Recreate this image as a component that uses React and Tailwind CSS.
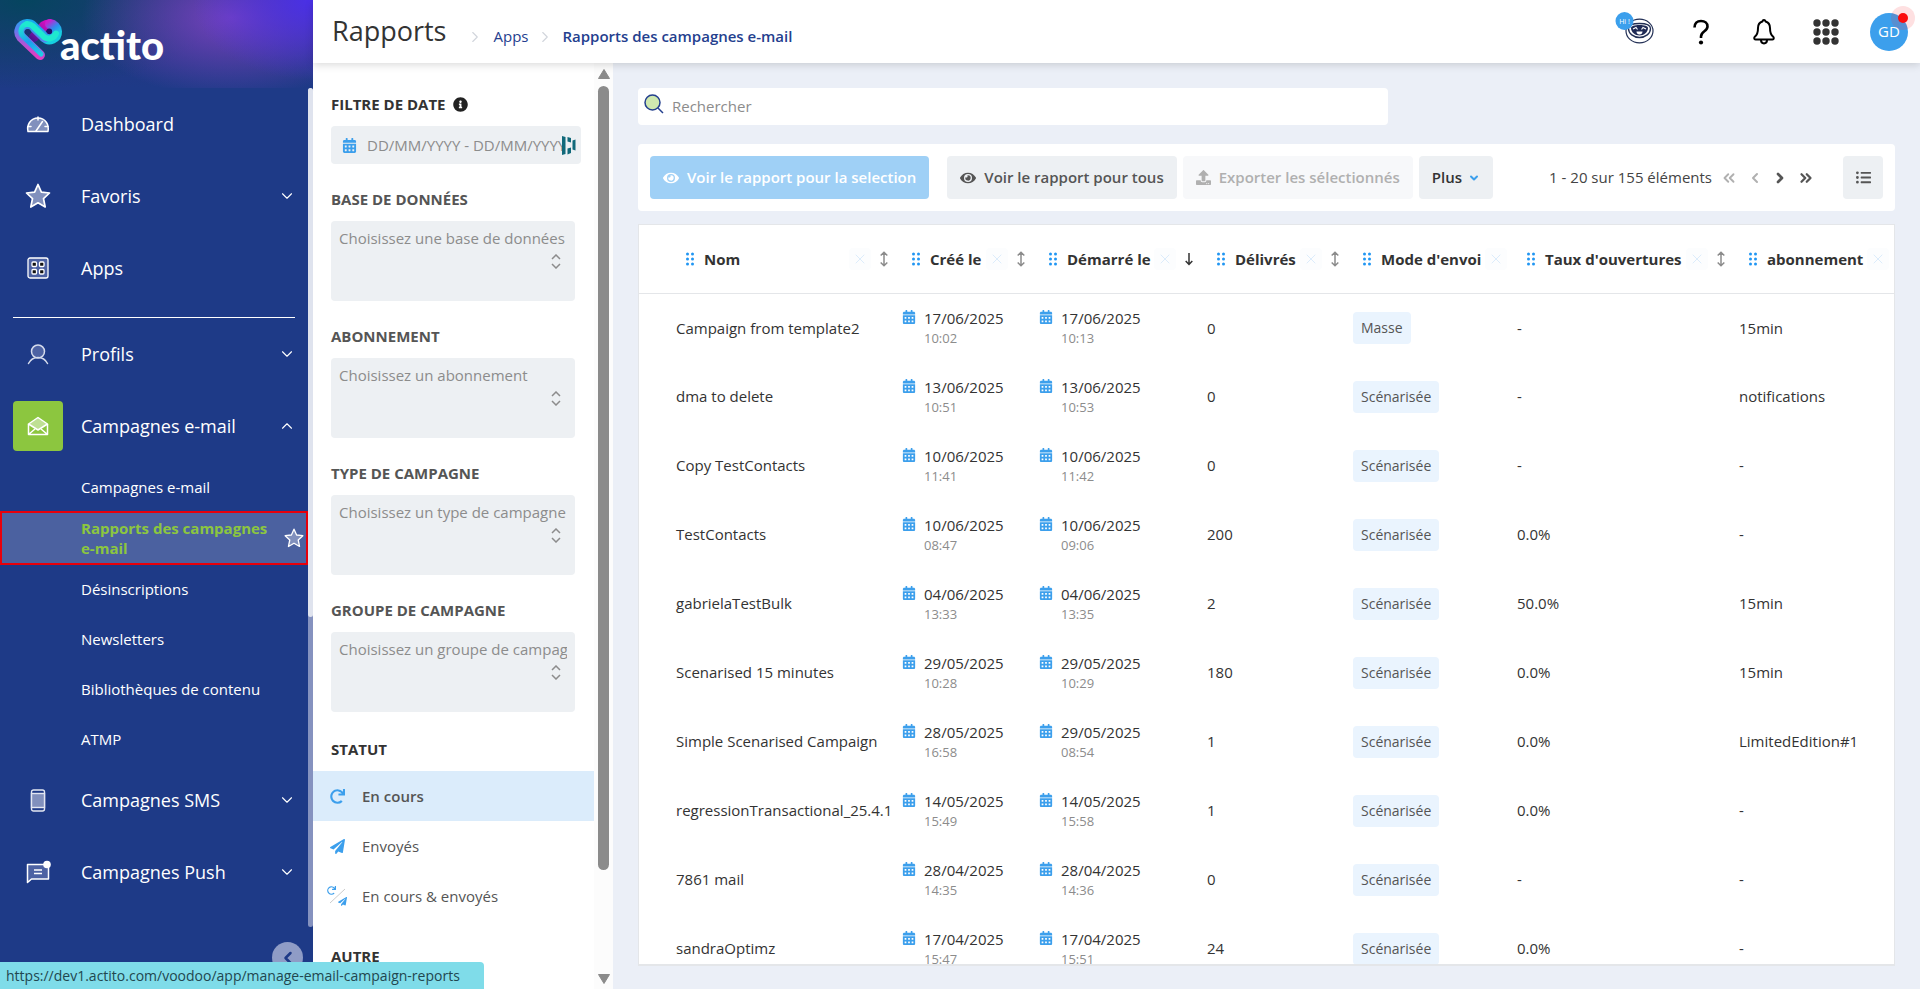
import { ChevronDown, ChevronLeft, ChevronRight, ChevronUp, ChevronsLeft, ChevronsRight, X } from 'lucide-react';
import { FaCalendarAlt, FaEye, FaInfoCircle, FaListUl, FaPaperPlane, FaRedo, FaUpload } from 'react-icons/fa';

const CAMPAIGNS = [
    { name: 'Campaign from template2', created: ['17/06/2025', '10:02'], started: ['17/06/2025', '10:13'], delivered: '0', mode: 'Masse', rate: '-', sub: '15min' },
    { name: 'dma to delete', created: ['13/06/2025', '10:51'], started: ['13/06/2025', '10:53'], delivered: '0', mode: 'Scénarisée', rate: '-', sub: 'notifications' },
    { name: 'Copy TestContacts', created: ['10/06/2025', '11:41'], started: ['10/06/2025', '11:42'], delivered: '0', mode: 'Scénarisée', rate: '-', sub: '-' },
    { name: 'TestContacts', created: ['10/06/2025', '08:47'], started: ['10/06/2025', '09:06'], delivered: '200', mode: 'Scénarisée', rate: '0.0%', sub: '-' },
    { name: 'gabrielaTestBulk', created: ['04/06/2025', '13:33'], started: ['04/06/2025', '13:35'], delivered: '2', mode: 'Scénarisée', rate: '50.0%', sub: '15min' },
    { name: 'Scenarised 15 minutes', created: ['29/05/2025', '10:28'], started: ['29/05/2025', '10:29'], delivered: '180', mode: 'Scénarisée', rate: '0.0%', sub: '15min' },
    { name: 'Simple Scenarised Campaign', created: ['28/05/2025', '16:58'], started: ['29/05/2025', '08:54'], delivered: '1', mode: 'Scénarisée', rate: '0.0%', sub: 'LimitedEdition#1' },
    { name: 'regressionTransactional_25.4.1', created: ['14/05/2025', '15:49'], started: ['14/05/2025', '15:58'], delivered: '1', mode: 'Scénarisée', rate: '0.0%', sub: '-' },
    { name: '7861 mail', created: ['28/04/2025', '14:35'], started: ['28/04/2025', '14:36'], delivered: '0', mode: 'Scénarisée', rate: '-', sub: '-' },
    { name: 'sandraOptimz', created: ['17/04/2025', '15:47'], started: ['17/04/2025', '15:51'], delivered: '24', mode: 'Scénarisée', rate: '0.0%', sub: '-' },
];

const COLUMNS = [
    { label: 'Nom', sort: 'both' },
    { label: 'Créé le', sort: 'both' },
    { label: 'Démarré le', sort: 'desc' },
    { label: 'Délivrés', sort: 'both' },
    { label: "Mode d'envoi" },
    { label: "Taux d'ouvertures", sort: 'both' },
    { label: 'abonnement' },
];

const FILTERS = [
    { id: 'database', label: 'Base de données', placeholder: 'Choisissez une base de données' },
    { id: 'subscription', label: 'Abonnement', placeholder: 'Choisissez un abonnement' },
    { id: 'type', label: 'Type de campagne', placeholder: 'Choisissez un type de campagne' },
    { id: 'group', label: 'Groupe de campagne', placeholder: 'Choisissez un groupe de campagne' },
];

function Logo() {
    return (
        <svg className="shrink-0" width="50" height="44" viewBox="0 0 50 44" fill="none" strokeLinecap="round" strokeLinejoin="round" aria-hidden="true">
            <defs>
                <linearGradient id="outer" gradientUnits="userSpaceOnUse" x1="24" y1="8" x2="12" y2="34">
                    <stop offset="0" stopColor="#18a9ee" />
                    <stop offset="0.5" stopColor="#5f7df0" />
                    <stop offset="1" stopColor="#e03cc4" />
                </linearGradient>
                <linearGradient id="inner" gradientUnits="userSpaceOnUse" x1="12" y1="6" x2="26" y2="40">
                    <stop offset="0" stopColor="#1fe9d0" />
                    <stop offset="0.5" stopColor="#1b9df0" />
                    <stop offset="1" stopColor="#22d0e4" />
                </linearGradient>
                <linearGradient id="fold" gradientUnits="userSpaceOnUse" x1="37" y1="4" x2="19" y2="24">
                    <stop offset="0" stopColor="#e80fc4" />
                    <stop offset="0.5" stopColor="#a30fb4" />
                    <stop offset="1" stopColor="#46158c" />
                </linearGradient>
                <linearGradient id="loop" gradientUnits="userSpaceOnUse" x1="34" y1="5" x2="44" y2="18">
                    <stop offset="0" stopColor="#c91fd0" />
                    <stop offset="0.5" stopColor="#2f8cf0" />
                    <stop offset="1" stopColor="#16cfe0" />
                </linearGradient>
            </defs>
            <path d="M36 7.500A8 8 0 0 0 30 9L20 20" stroke="url(#fold)" strokeWidth="10" />
            <path d="M36 7A8 8 0 0 1 43 14.500A7.500 7.500 0 0 1 30.300 20.200" stroke="url(#loop)" strokeWidth="10" />
            <path d="M26 38L7.300 20.200A8 8 0 0 1 13 7A8 8 0 0 1 18.700 9L30.300 20.200" stroke="url(#outer)" strokeWidth="10" />
            <path d="M27 37L9 19.500A7.500 7.500 0 0 1 13 7" stroke="url(#inner)" strokeWidth="5" />
            <path d="M13 7A8 8 0 0 1 18.700 9L30.300 20.200A8 8 0 0 0 42 16.500" stroke="#1fe9cf" strokeWidth="6" />
            <circle cx="14" cy="14.700" r="2.600" fill="#1b3173" />
            <circle cx="35.300" cy="14.200" r="2.800" fill="#23106a" />
        </svg>
    );
}

function DashboardIcon() {
    return (
        <svg width="24" height="18" viewBox="0 0 24 18" fill="none" stroke="#fff" strokeWidth="1.5" strokeLinecap="round" strokeLinejoin="round">
            <path d="M2 16.5h20c.5-3 .5-6-1.500-9A10.300 10.300 0 0 0 3.500 7.500C1.500 10.500 1.300 13.500 2 16.500z" fill="#8190bd" />
            <path d="M12 2v3M2 11.500h3M19 11.500h3M10 16l6.500-9.500" />
        </svg>
    );
}

function StarIcon({ size = 26 }) {
    return (
        <svg width={size} height={size} viewBox="0 0 26 26" fill="#8190bd" stroke="#fff" strokeWidth="1.700" strokeLinejoin="round">
            <path d="M13 1.500l3.400 7.600 8.100.9-6 5.600 1.700 8.400-7.200-4.200L5.800 24l1.700-8.400-6-5.600 8.100-.9z" />
        </svg>
    );
}

function AppsIcon() {
    return (
        <svg width="22" height="22" viewBox="0 0 22 22" stroke="#fff" fill="none">
            <rect x="1" y="1" width="20" height="20" rx="2" fill="#4d62a3" strokeWidth="1.300" />
            {[5, 12.5].map((x) =>
                [5, 12.5].map((y) => <rect key={`${x}-${y}`} x={x} y={y} width="4.500" height="4.500" rx="1" fill="#111" strokeWidth="1.300" />)
            )}
        </svg>
    );
}

function ProfileIcon() {
    return (
        <svg width="22" height="21" viewBox="0 0 22 21" fill="none" stroke="#d5dbec" strokeWidth="1.500" strokeLinecap="round">
            <circle cx="11" cy="7.500" r="6.500" fill="#4d62a3" />
            <path d="M1.500 19.500c2-4 5.500-6 9.500-6s7.500 2 9.500 6" />
        </svg>
    );
}

function MailIcon() {
    return (
        <svg width="22" height="20" viewBox="0 0 22 20" fill="none" stroke="#fff" strokeWidth="1.500" strokeLinejoin="round">
            <path d="M1.500 8L11 1.500 20.500 8 11 14z" fill="#bfe094" />
            <path d="M1.500 8v10.500h19V8M1.500 18.500l6.500-5.500M20.500 18.500L14 13" />
        </svg>
    );
}

function PhoneIcon() {
    return (
        <svg width="16" height="23" viewBox="0 0 16 23" fill="none" stroke="#e3e7f2" strokeWidth="1.400">
            <rect x="1.500" y="1" width="13" height="21" rx="2" />
            <rect x="1.500" y="4.500" width="13" height="14" fill="#8190bd" />
        </svg>
    );
}

function PushIcon() {
    return (
        <svg width="25" height="24" viewBox="0 0 25 24" fill="none" stroke="#fff" strokeWidth="1.500" strokeLinejoin="round">
            <path d="M1.500 4.500h21v14.500H5.500l-4 3.500z" fill="#4d62a3" />
            <path d="M8 10h8M8 13.500h8" />
            <circle cx="21" cy="4.500" r="3.800" fill="#fff" stroke="none" />
        </svg>
    );
}

function RobotIcon() {
    return (
        <svg width="40" height="34" viewBox="0 0 40 34" fill="none" aria-hidden="true">
            <ellipse cx="24.500" cy="20" rx="13.500" ry="11.800" stroke="#233056" strokeWidth="1.200" />
            <path d="M13.500 17.500c0-3 4-5 11-5s11 2 11 5c0 5-5 9-11 9s-11-4-11-9z" stroke="#233056" strokeWidth="1.300" />
            <path d="M16 17c0-2 3.500-3 8.500-3s8.500 1 8.500 3c0 4-4 7.500-8.500 7.500S16 21 16 17z" fill="#1f2a55" />
            <path d="M18 18l3-1.500 1.500 2M31 18l-3-1.500-1.500 2" stroke="#fff" strokeWidth="1.200" />
            <path d="M21.500 20.500h6c0 2-1.300 3-3 3s-3-1-3-3z" fill="#fff" />
            <circle cx="9.500" cy="10" r="9" fill="#3c9fec" />
            <text x="9.500" y="12.500" textAnchor="middle" fontSize="7" fill="#fff" fontFamily="Open Sans, sans-serif">Hi !</text>
        </svg>
    );
}

function BellIcon() {
    return (
        <svg width="22" height="26" viewBox="0 0 22 26" fill="none" stroke="#000" strokeWidth="2" strokeLinejoin="round">
            <path d="M9.500 2.500a1.500 1.500 0 0 1 3 0c3 .8 4.500 3.500 4.500 6.500 0 5 1 7 3 8.500 1.200 1 1 3-.5 3h-17c-1.500 0-1.700-2-.5-3C4 16 5 14 5 9c0-3 1.500-5.700 4.500-6.500z" />
            <path d="M8 21c0 4.500 6 4.500 6 0" />
        </svg>
    );
}

function HelpIcon() {
    return (
        <svg width="16" height="26" viewBox="0 0 16 26" fill="none" stroke="#000" strokeWidth="2.600">
            <path d="M1.500 8.500C1.500 4.500 4 2 8 2s6.500 2.300 6.500 5.500c0 5-6.500 4.500-6.500 10V19" />
            <circle cx="8" cy="23.500" r="2.100" fill="#000" stroke="none" />
        </svg>
    );
}

function DotsIcon() {
    return (
        <svg width="26" height="26" viewBox="0 0 26 26" fill="#333">
            {[4, 13, 22].map((x) => [4, 13, 22].map((y) => <circle key={`${x}-${y}`} cx={x} cy={y} r="3.700" />))}
        </svg>
    );
}

function DragIcon() {
    return (
        <svg className="shrink-0" width="8" height="14" viewBox="0 0 8 14" fill="#2196f3">
            {[1.5, 6.5].map((x) => [2, 7, 12].map((y) => <circle key={`${x}-${y}`} cx={x} cy={y} r="1.500" />))}
        </svg>
    );
}

function SortIcon({ sort }) {
    if (sort === 'desc') {
        return (
            <svg width="8" height="16" viewBox="0 0 8 16" fill="none" stroke="#333" strokeWidth="1.500">
                <path d="M4 2v11.500M.7 10L4 13.500 7.300 10" />
            </svg>
        );
    }
    return (
        <svg width="8" height="16" viewBox="0 0 8 16" fill="none" stroke="#8c8c8c" strokeWidth="1.500">
            <path d="M4 1.500v13M.7 4.500L4 1.200l3.300 3.300M.7 11.500L4 14.800l3.300-3.300" />
        </svg>
    );
}

function NavItem({ icon, label, chevron, active }) {
    const Chevron = chevron === 'up' ? ChevronUp : ChevronDown;
    return (
        <button className="flex h-18 w-full items-center pl-[13px] pr-3 text-left text-lg text-white">
            <span className={`flex size-[50px] items-center justify-center rounded ${active ? 'bg-[#8cc63f]' : ''}`}>{icon}</span>
            <span className="ml-[18px] flex-1">{label}</span>
            {chevron && <Chevron size={18} strokeWidth={1.5} />}
        </button>
    );
}

function SubItem({ label }) {
    return (
        <a href="#" className="flex h-[50px] items-center pl-[81px] pr-10 text-[15px] text-white">
            {label}
        </a>
    );
}

function Sidebar() {
    return (
        <aside className="relative flex w-[313px] shrink-0 flex-col bg-[#1e3a87] text-white">
            <div className="h-[88px] shrink-0 bg-[radial-gradient(ellipse_120px_80px_at_100%_0%,#4a30e8,transparent),radial-gradient(ellipse_150px_80px_at_74%_20%,#7442bd,transparent),radial-gradient(ellipse_200px_90px_at_8%_0%,#05455f,transparent),linear-gradient(#28337f,#1e3a87)] pl-[14px] pt-[17px]">
                <a href="#" className="flex items-start">
                    <Logo />
                    <span className="-ml-1 pt-[10px] font-['Lato',sans-serif] text-[40px] leading-9 font-black">actito</span>
                </a>
            </div>
            <div className="flex min-h-0 flex-1">
                <nav className="min-w-0 flex-1">
                    <NavItem icon={<DashboardIcon />} label="Dashboard" />
                    <NavItem icon={<StarIcon />} label="Favoris" chevron="down" />
                    <NavItem icon={<AppsIcon />} label="Apps" />
                    <hr className="mx-[13px] mt-[13px] border-white" />
                    <NavItem icon={<ProfileIcon />} label="Profils" chevron="down" />
                    <NavItem icon={<MailIcon />} label="Campagnes e-mail" chevron="up" active />
                    <SubItem label="Campagnes e-mail" />
                    <a href="#" className="-my-px flex h-[54px] items-center justify-between border-2 border-red-600 bg-[#4b61a0] pr-0.5 pl-[79px] text-[15px] leading-5 font-bold text-[#8cc63f]">
                        <span className="w-48">Rapports des campagnes e-mail</span>
                        <StarIcon size={20} />
                    </a>
                    <SubItem label="Désinscriptions" />
                    <SubItem label="Newsletters" />
                    <SubItem label="Bibliothèques de contenu" />
                    <SubItem label="ATMP" />
                    <NavItem icon={<PhoneIcon />} label="Campagnes SMS" chevron="down" />
                    <NavItem icon={<PushIcon />} label="Campagnes Push" chevron="down" />
                </nav>
                <div className="mb-[62px] w-[5px] rounded bg-[#8592bf]">
                    <div className="h-[63%] rounded bg-[#dfe3ee]" />
                </div>
            </div>
            <button aria-label="Réduire le menu" className="absolute right-[10px] bottom-4 flex size-[31px] items-center justify-center rounded-full bg-[#8f9cc6] text-[#1e3a87]">
                <ChevronLeft size={20} strokeWidth={3} />
            </button>
        </aside>
    );
}

function Header() {
    return (
        <header className="z-10 flex h-[63px] shrink-0 items-center bg-white pr-3 pl-[19px] shadow-[0_2px_8px_rgba(0,0,0,0.15)]">
            <h1 className="text-[27px] font-medium text-[#333]">Rapports</h1>
            <nav className="flex items-center pt-2.5 pl-5 text-[15px] text-[#24408e]">
                <ChevronRight size={18} strokeWidth={1.5} className="text-gray-300" />
                <a href="#" className="ml-[9px]">Apps</a>
                <ChevronRight size={18} strokeWidth={1.5} className="mx-2 text-gray-300" />
                <a href="#" className="font-semibold">Rapports des campagnes e-mail</a>
            </nav>
            <div className="ml-auto flex items-center">
                <button aria-label="Assistant" className="mr-[38px] mb-2"><RobotIcon /></button>
                <button aria-label="Aide" className="mr-11"><HelpIcon /></button>
                <button aria-label="Notifications" className="mr-[38px]"><BellIcon /></button>
                <button aria-label="Applications" className="mr-[31px]"><DotsIcon /></button>
                <button className="relative size-[38px] rounded-full bg-[#3c9fec] text-[15px] text-white">
                    GD
                    <span className="absolute -top-[7px] -right-[7px] flex size-6 items-center justify-center rounded-full bg-red-500/15">
                        <span className="size-[10px] rounded-full bg-[#fb0d0d]" />
                    </span>
                </button>
            </div>
        </header>
    );
}

function StatusItem({ icon, label, active }) {
    return (
        <button className={`flex h-[50px] w-full items-center pl-[14px] text-left text-[#555] ${active ? 'bg-[#dbecfb] font-semibold' : ''}`}>
            <span className="flex w-5 justify-center text-[#3c9fec]">{icon}</span>
            <span className="ml-[15px]">{label}</span>
        </button>
    );
}

function Filters() {
    return (
        <div className="flex w-[300px] shrink-0 overflow-hidden bg-white">
            <div className="min-w-0 flex-1 pt-[31px]">
                <div className="pr-8 pl-[18px]">
                    <label htmlFor="dates" className="flex h-5 items-center gap-[7px] font-bold text-[#333] uppercase">
                        Filtre de date <FaInfoCircle className="text-[#222]" />
                    </label>
                    <div className="relative mt-3">
                        <FaCalendarAlt className="absolute top-3 left-[11px] text-[#3c9fec]" />
                        <input id="dates" placeholder="DD/MM/YYYY - DD/MM/YYYY" className="h-[38px] w-[250px] rounded bg-[#edf0f3] pr-4 pl-9 placeholder:text-[#8c8c8c]" />
                        <svg className="absolute top-[10px] left-[231px]" width="14" height="19" viewBox="0 0 14 19" fill="#11697a">
                            <path d="M0 0l3.500 1v17L0 19zM5.500 1L9 2v4.500l-3.500-1zM5.500 12.500L9 11.500V17l-3.500 1.500zM10.500 4.500L13.500 3.500v11l-3-1z" />
                        </svg>
                    </div>
                    {FILTERS.map((filter) => (
                        <div key={filter.id} className="mt-[25px]">
                            <label htmlFor={filter.id} className="block h-5 leading-5 font-bold text-[#555] uppercase">{filter.label}</label>
                            <div className="relative mt-3">
                                <select id={filter.id} className="h-20 w-[244px] appearance-none rounded bg-[#edf0f3] px-2 pb-[46px] text-[#8c8c8c]">
                                    <option>{filter.placeholder}</option>
                                </select>
                                <svg className="pointer-events-none absolute top-[33px] left-[220px]" width="10" height="15" viewBox="0 0 10 15" fill="none" stroke="#8c8c8c" strokeWidth="1.500">
                                    <path d="M1 5l4-4 4 4M1 10l4 4 4-4" />
                                </svg>
                            </div>
                        </div>
                    ))}
                    <h2 className="mt-[27px] h-5 leading-5 font-bold text-[#333] uppercase">Statut</h2>
                </div>
                <div className="mt-3">
                    <StatusItem active icon={<FaRedo />} label="En cours" />
                    <StatusItem icon={<FaPaperPlane />} label="Envoyés" />
                    <StatusItem
                        icon={
                            <span className="relative size-5">
                                <FaRedo className="absolute top-0 left-0 size-[9px]" />
                                <svg className="absolute inset-0" width="20" height="20" viewBox="0 0 20 20" stroke="#ccc"><path d="M3 17L18 3" /></svg>
                                <FaPaperPlane className="absolute right-0 bottom-0 size-[9px]" />
                            </span>
                        }
                        label="En cours & envoyés"
                    />
                </div>
                <h2 className="mt-6 pl-[18px] font-bold text-[#333] uppercase">Autre</h2>
            </div>
            <div className="flex w-[19px] flex-col items-center bg-[#fcfcfc] pt-[5px] pb-1">
                <svg width="14" height="12" viewBox="0 0 14 12" fill="#8b8b8b"><path d="M7 1.500L12.500 10.500h-11z" stroke="#8b8b8b" strokeLinejoin="round" /></svg>
                <div className="mt-1.5 w-[11px] rounded-full bg-[#8b8b8b] basis-[784px]" />
                <svg className="mt-auto" width="14" height="12" viewBox="0 0 14 12" fill="#8b8b8b"><path d="M7 10.500L1.500 1.500h11z" stroke="#8b8b8b" strokeLinejoin="round" /></svg>
            </div>
        </div>
    );
}

function Toolbar() {
    return (
        <div className="mt-[19px] flex h-[67px] shrink-0 items-center rounded-sm bg-white px-3">
            <button className="flex h-[43px] items-center gap-2 rounded bg-[#9fd0f6] px-[13px] font-semibold text-white">
                <FaEye size={16} /> Voir le rapport pour la selection
            </button>
            <button className="ml-[18px] flex h-[43px] items-center gap-2 rounded bg-[#edf0f3] px-[13px] font-semibold text-[#555]">
                <FaEye size={16} /> Voir le rapport pour tous
            </button>
            <button disabled className="ml-1.5 flex h-[43px] items-center gap-2 rounded bg-[#f7f8fa] px-[13px] font-semibold text-[#b0b0b0]">
                <FaUpload /> Exporter les sélectionnés
            </button>
            <button className="ml-1.5 flex h-[43px] items-center gap-1.5 rounded bg-[#edf0f3] px-[13px] font-semibold text-[#333]">
                Plus <ChevronDown size={12} strokeWidth={4} className="text-[#3c9fec]" />
            </button>
            <span className="ml-auto text-[#444]">1 - 20 sur 155 éléments</span>
            <div className="ml-2 flex items-center gap-[9px] text-[#555]">
                <button disabled aria-label="Première page" className="text-[#b0b0b0]"><ChevronsLeft size={18} strokeWidth={2.5} /></button>
                <button disabled aria-label="Page précédente" className="text-[#b0b0b0]"><ChevronLeft size={16} strokeWidth={3} /></button>
                <button aria-label="Page suivante"><ChevronRight size={16} strokeWidth={4} /></button>
                <button aria-label="Dernière page"><ChevronsRight size={18} strokeWidth={3} /></button>
            </div>
            <button aria-label="Colonnes" className="ml-7 flex h-[43px] w-10 items-center justify-center rounded bg-[#edf0f3] text-[#555]">
                <FaListUl />
            </button>
        </div>
    );
}

function DateCell({ value }) {
    return (
        <div className="flex gap-2">
            <FaCalendarAlt className="mt-[2px] size-[14px] shrink-0 text-[#3c9fec]" />
            <div className="leading-5">
                {value[0]}
                <div className="text-[13px] text-[#8c8c8c]">{value[1]}</div>
            </div>
        </div>
    );
}

function ReportsTable() {
    return (
        <div className="mt-[13px] mb-[23px] min-h-0 flex-1 overflow-hidden border border-b-2 border-[#e4e6e9] bg-white">
            <table className="w-full table-fixed text-left text-[#333]">
                <colgroup>
                    <col className="w-[37px]" />
                    <col className="w-[226px]" />
                    <col className="w-[137px]" />
                    <col className="w-[168px]" />
                    <col className="w-[146px]" />
                    <col className="w-[164px]" />
                    <col className="w-[222px]" />
                    <col />
                </colgroup>
                <thead>
                    <tr className="h-[68px] border-b border-[#e4e6e9]">
                        <th />
                        {COLUMNS.map(({ label, sort }) => (
                            <th key={label} className="p-0 font-bold whitespace-nowrap">
                                <div className="flex items-center pl-2.5">
                                    <DragIcon />
                                    <span className="ml-2.5">{label}</span>
                                    <button aria-label="Retirer" className={`${sort ? 'ml-auto' : 'ml-1'} flex size-[22px] shrink-0 items-center justify-center rounded bg-[#fcfdfe] text-[#dcecfb]`}>
                                        <X size={16} strokeWidth={1.5} />
                                    </button>
                                    {sort && <button aria-label="Trier" className="mr-[14px] ml-[9px]"><SortIcon sort={sort} /></button>}
                                </div>
                            </th>
                        ))}
                    </tr>
                </thead>
                <tbody>
                    {CAMPAIGNS.map((row) => (
                        <tr key={row.name} className="h-[69px]">
                            <td />
                            <td className="p-0 whitespace-nowrap">{row.name}</td>
                            <td className="p-0"><DateCell value={row.created} /></td>
                            <td className="p-0"><DateCell value={row.started} /></td>
                            <td className="p-0">{row.delivered}</td>
                            <td className="p-0">
                                <span className="inline-flex h-8 items-center rounded bg-[#eaf4fe] px-2 text-sm text-[#555]">{row.mode}</span>
                            </td>
                            <td className="p-0">{row.rate}</td>
                            <td className="p-0">{row.sub}</td>
                        </tr>
                    ))}
                </tbody>
            </table>
        </div>
    );
}

export default function App() {
    return (
        <div className="flex h-screen overflow-hidden font-['Open_Sans',sans-serif] text-[15px]">
            <Sidebar />
            <div className="flex min-w-0 flex-1 flex-col">
                <Header />
                <div className="flex min-h-0 flex-1">
                    <Filters />
                    <main className="flex min-w-0 flex-1 flex-col bg-[#ebeff7] pt-[25px] pr-[25px] pl-[25px]">
                        <label className="flex h-[37px] w-[750px] shrink-0 items-center rounded bg-white pl-1.5">
                            <svg className="-mt-1.5 shrink-0" width="20" height="20" viewBox="0 0 20 20" fill="none" stroke="#24408e" strokeWidth="1.500">
                                <circle cx="8.500" cy="8.500" r="7.500" fill="#cfe8b0" />
                                <path d="M14 14l5 5" />
                            </svg>
                            <input aria-label="Rechercher" placeholder="Rechercher" className="ml-2 w-full outline-none placeholder:text-[#8c8c8c]" />
                        </label>
                        <Toolbar />
                        <ReportsTable />
                    </main>
                </div>
            </div>
            <div className="fixed bottom-0 left-0 z-20 h-[27px] rounded-tr bg-[#7fdce9] pr-6 pl-1.5 text-sm leading-[27px] text-[#22474f]">
                https://dev1.actito.com/voodoo/app/manage-email-campaign-reports
            </div>
        </div>
    );
}
